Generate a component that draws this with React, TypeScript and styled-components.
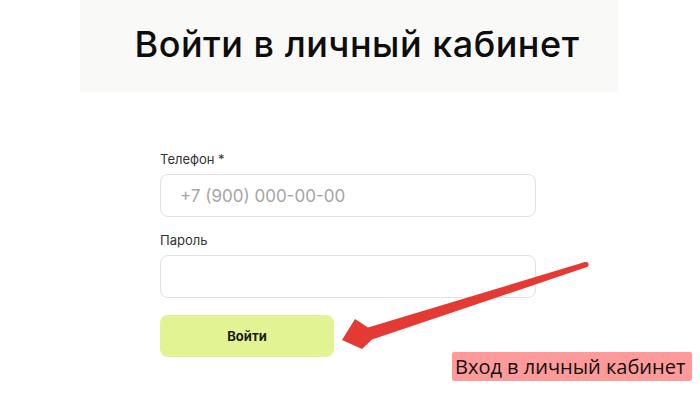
import React from "react";
import styled, { createGlobalStyle } from "styled-components";

const GlobalStyle = createGlobalStyle`
    html, body {
        margin: 0;
        padding: 0;
        background: #ffffff;
    }
    body {
        font-family: Inter, "Noto Sans", sans-serif;
        color: #111;
    }
    * {
        box-sizing: border-box;
    }
`;

export default function App() {
    return (
        <>
            <GlobalStyle />
            <Page>
                <TitleBlock>
                    <Title>Войти в личный кабинет</Title>
                </TitleBlock>
                <Form onSubmit={(e) => e.preventDefault()}>
                    <Field>
                        <Label>Телефон *</Label>
                        <Input type="tel" placeholder="+7 (900) 000-00-00" />
                    </Field>
                    <Field>
                        <Label>Пароль</Label>
                        <Input type="password" />
                    </Field>
                    <SubmitButton type="submit">Войти</SubmitButton>
                </Form>
                <Arrow viewBox="0 0 700 400" aria-hidden="true">
                    <polygon
                        points="585,262 587,267 372,339.5 362,349 342,340 355,319 368,327.5"
                        fill="#e53a33"
                    />
                    <circle cx="586" cy="264.5" r="2.6" fill="#e53a33" />
                </Arrow>
                <Note>Вход в личный кабинет</Note>
            </Page>
        </>
    );
}

const Page = styled.div`
    position: relative;
    width: 700px;
    height: 400px;
    overflow: hidden;
`;
const TitleBlock = styled.div`
    width: 538px;
    height: 92px;
    margin: 0 0 0 80px;
    padding-left: 16px;
    background-color: #f9f9f7;
    display: flex;
    align-items: center;
    justify-content: center;
`;
const Title = styled.h1`
    margin: 0;
    padding-bottom: 4px;
    font-size: 36px;
    font-weight: 500;
    letter-spacing: 0.5px;
    color: #0d0d0d;
`;
const Form = styled.form`
    width: 376px;
    margin: 59px 0 0 160px;
    display: flex;
    flex-direction: column;
`;
const Field = styled.div`
    display: flex;
    flex-direction: column;
    gap: 7px;
    margin-bottom: 15px;
`;
const Label = styled.label`
    font-size: 13px;
    line-height: 16px;
    color: #333;
`;
const Input = styled.input`
    width: 376px;
    height: 43px;
    padding: 0 19px;
    border: 1px solid #e2e2e2;
    border-radius: 8px;
    font-family: inherit;
    font-size: 17px;
    color: #222;
    outline: none;
    &::placeholder {
        color: #a6a6a6;
    }
`;
const SubmitButton = styled.button`
    width: 174px;
    height: 42px;
    margin-top: 2px;
    border: none;
    border-radius: 8px;
    background-color: #e2f394;
    font-family: inherit;
    font-size: 13px;
    font-weight: 700;
    color: #1a1a1a;
    cursor: pointer;
`;
const Arrow = styled.svg`
    position: absolute;
    left: 0;
    top: 0;
    width: 700px;
    height: 400px;
    pointer-events: none;
`;
const Note = styled.div`
    position: absolute;
    left: 452px;
    top: 352px;
    width: 240px;
    height: 29px;
    padding-left: 3px;
    background-color: #ff9a9a;
    border-radius: 2px;
    font-family: "Open Sans", sans-serif;
    font-size: 20px;
    line-height: 29px;
    color: #111;
    white-space: nowrap;
`;
